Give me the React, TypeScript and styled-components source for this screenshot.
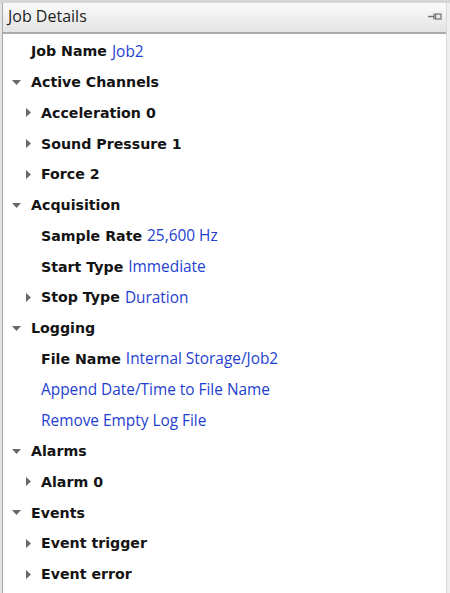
import styled, { createGlobalStyle } from 'styled-components';

const GlobalStyle = createGlobalStyle`
  html, body {
    margin: 0;
    padding: 0;
    background: #ffffff;
  }
`;

const Frame = styled.div`
  display: flex;
  width: 450px;
  height: 593px;
  overflow: hidden;
  background: #ffffff;
  border-top: 3px solid #d6d6d6;
  box-sizing: border-box;
`;

const Gutter = styled.div`
  width: 2px;
  background: #e4e4e4;
  border-right: 1px solid #a9a9a9;
`;

const Panel = styled.div`
  flex: 1;
  display: flex;
  flex-direction: column;
  min-width: 0;
`;

const Header = styled.div`
  display: flex;
  align-items: flex-start;
  justify-content: space-between;
  height: 31px;
  box-sizing: border-box;
  padding: 2px 4px 0 5px;
  background: linear-gradient(#fbfbfb, #e3e3e3);
  border-bottom: 2px solid #ababab;
  font-family: 'Open Sans', 'Noto Sans', sans-serif;
  font-size: 16px;
  line-height: 22px;
  color: #1e1e1e;

  svg {
    margin-top: 8px;
  }
`;

const Tree = styled.ul`
  list-style: none;
  margin: 0;
  padding: 2px 0 0;
`;

const Row = styled.li<{ $level: number }>`
  display: flex;
  align-items: center;
  height: 30.76px;
  padding-left: ${(p) => 6 + p.$level * 10}px;
  font-family: 'DejaVu Sans', Verdana, sans-serif;
  font-size: 14.2px;
  white-space: nowrap;
`;

const Toggle = styled.span<{ $hidden?: boolean }>`
  display: inline-flex;
  align-items: center;
  justify-content: flex-end;
  box-sizing: border-box;
  width: 22px;
  height: 14px;
  padding-right: 10px;
  visibility: ${(p) => (p.$hidden ? 'hidden' : 'visible')};

  svg {
    display: block;
  }
`;

const Label = styled.span`
  font-weight: bold;
  color: #141414;
  margin-right: 5px;
`;

const Value = styled.span`
  font-family: 'Open Sans', 'Noto Sans', sans-serif;
  font-size: 15.4px;
  color: #1f3fd0;
`;

const Scrollbar = styled.div`
  width: 3px;
  background: #efefef;
  border-left: 1px solid #d9d9d9;
`;

const Arrow = ({ open }: { open?: boolean }) =>
  open ? (
    <svg width="9" height="5" viewBox="0 0 9 5">
      <path d="M0 0 H9 L4.5 5 Z" fill="#686868" />
    </svg>
  ) : (
    <svg width="5" height="9" viewBox="0 0 5 9">
      <path d="M0 0 L5 4.5 L0 9 Z" fill="#686868" />
    </svg>
  );

const PinIcon = () => (
  <svg width="14" height="7" viewBox="0 0 14 7">
    <path d="M0 3.5 H6" stroke="#6e6e6e" strokeWidth="1.4" />
    <path d="M6 0.5 V6.5" stroke="#6e6e6e" strokeWidth="1.2" />
    <rect x="7.5" y="1" width="5.5" height="5" fill="#e8e8e8" stroke="#6e6e6e" strokeWidth="1.2" />
  </svg>
);

type Node = {
  level: number;
  toggle?: 'open' | 'closed';
  label?: string;
  value?: string;
};

const nodes: Node[] = [
  { level: 0, label: 'Job Name', value: 'Job2' },
  { level: 0, toggle: 'open', label: 'Active Channels' },
  { level: 1, toggle: 'closed', label: 'Acceleration 0' },
  { level: 1, toggle: 'closed', label: 'Sound Pressure 1' },
  { level: 1, toggle: 'closed', label: 'Force 2' },
  { level: 0, toggle: 'open', label: 'Acquisition' },
  { level: 1, label: 'Sample Rate', value: '25,600 Hz' },
  { level: 1, label: 'Start Type', value: 'Immediate' },
  { level: 1, toggle: 'closed', label: 'Stop Type', value: 'Duration' },
  { level: 0, toggle: 'open', label: 'Logging' },
  { level: 1, label: 'File Name', value: 'Internal Storage/Job2' },
  { level: 1, value: 'Append Date/Time to File Name' },
  { level: 1, value: 'Remove Empty Log File' },
  { level: 0, toggle: 'open', label: 'Alarms' },
  { level: 1, toggle: 'closed', label: 'Alarm 0' },
  { level: 0, toggle: 'open', label: 'Events' },
  { level: 1, toggle: 'closed', label: 'Event trigger' },
  { level: 1, toggle: 'closed', label: 'Event error' },
];

const App = () => {
  return (
    <>
      <GlobalStyle />
      <Frame>
        <Gutter />
        <Panel>
          <Header>
            <span>Job Details</span>
            <PinIcon />
          </Header>
          <Tree>
            {nodes.map((n, i) => (
              <Row key={i} $level={n.level}>
                <Toggle $hidden={!n.toggle}>
                  <Arrow open={n.toggle === 'open'} />
                </Toggle>
                {n.label && <Label>{n.label}</Label>}
                {n.value && <Value>{n.value}</Value>}
              </Row>
            ))}
          </Tree>
        </Panel>
        <Scrollbar />
      </Frame>
    </>
  );
};

export default App;
